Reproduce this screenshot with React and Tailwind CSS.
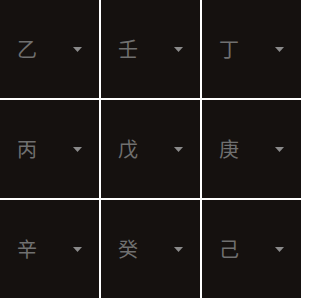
const stems = ["乙", "壬", "丁", "丙", "戊", "庚", "辛", "癸", "己"];

function Caret() {
  return (
    <svg width="9" height="5" viewBox="0 0 9 5" className="block">
      <path d="M0 0 H9 L4.5 5 Z" fill="#8a8a8a" />
    </svg>
  );
}

export default function App() {
  return (
    <div className="grid h-[298px] w-[301px] grid-cols-3 grid-rows-3 gap-[2px] bg-white">
      {stems.map((s) => (
        <div
          key={s}
          className="flex items-center justify-center gap-[36px] bg-[#15110f]"
        >
          <span className="font-['Noto_Sans_CJK_SC',sans-serif] text-[20px] leading-none text-[#707070]">
            {s}
          </span>
          <Caret />
        </div>
      ))}
    </div>
  );
}
